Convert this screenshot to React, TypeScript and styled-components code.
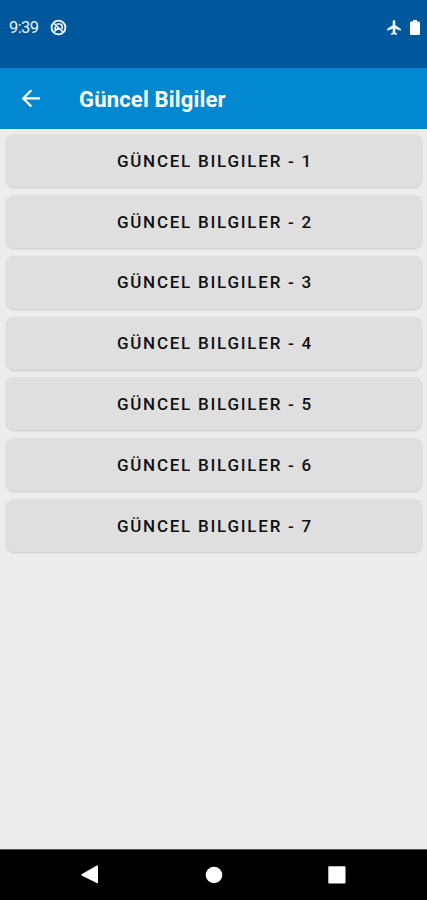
import React from 'react';
import styled, { createGlobalStyle } from 'styled-components';

const GlobalStyle = createGlobalStyle`
  * { box-sizing: border-box; }
  html, body { margin: 0; padding: 0; }
  body { font-family: Roboto, sans-serif; background: #ecedef; }
`;

const Screen = styled.div`
  display: flex;
  flex-direction: column;
  width: 427px;
  height: 900px;
  overflow: hidden;
  background: #ecedef;
`;

const StatusBar = styled.header`
  display: flex;
  align-items: center;
  flex: 0 0 68px;
  padding: 0 7px 13px 9px;
  color: #eef4fb;
  background: #01579b;
`;

const Clock = styled.span`
  width: 41px;
  font-size: 16.5px;
  line-height: 20px;
  letter-spacing: -0.6px;
  padding-top: 1px;
`;

const StatusIcons = styled.div`
  display: flex;
  align-items: center;
  gap: 9px;
  margin-left: auto;
`;

const Icon = styled.svg`
  display: block;
  flex: none;
`;

const AppBar = styled.div`
  display: flex;
  align-items: center;
  flex: 0 0 60.5px;
  padding-left: 18px;
  color: #fff;
  background: #0288d1;
`;

const BackButton = styled.button`
  display: flex;
  width: 61px;
  padding: 0;
  border: 0;
  color: #fff;
  background: none;
`;

const Title = styled.h1`
  margin: 0;
  padding-top: 3px;
  font-size: 22px;
  line-height: 28px;
  font-weight: 700;
  letter-spacing: 0.18px;
`;

const List = styled.main`
  display: flex;
  flex: 1;
  flex-direction: column;
  gap: 7.8px;
  padding: 5.8px 5.5px 0 6.4px;
`;

const ListButton = styled.button`
  flex: 0 0 53px;
  padding: 0 0 0 2px;
  border: 0;
  border-radius: 8px;
  color: #101010;
  background: #dfdfdf;
  box-shadow: 0 1px 2px rgba(0, 0, 0, 0.15);
  font: 500 17px/24px Roboto, sans-serif;
  letter-spacing: 1.75px;
`;

const NavBar = styled.nav`
  display: flex;
  align-items: center;
  justify-content: space-between;
  flex: 0 0 51px;
  padding: 0 81px 0 80px;
  background: #000;
  border-top: 1px solid #555;
`;

const items = [1, 2, 3, 4, 5, 6, 7];

export default function App() {
  return (
    <>
      <GlobalStyle />
      <Screen>
        <StatusBar>
          <Clock>9:39</Clock>
          <Icon width="17" height="17" viewBox="0 0 17 17" fill="none" stroke="currentColor">
            <circle cx="8.5" cy="8.5" r="6.9" strokeWidth="1.9" />
            <path d="M4 4.3 13 13M6.6 5h3.2a2.3 2.3 0 0 1 2.3 2.3v3M5.2 7.6v4.2l1.8-1.6h2" strokeWidth="1.7" />
          </Icon>
          <StatusIcons>
            <Icon width="14" height="15" viewBox="1.5 1.5 21 21" preserveAspectRatio="none" fill="currentColor" stroke="currentColor" strokeWidth="0.8">
              <path d="M22 16v-2l-8.5-5V3.5C13.5 2.67 12.83 2 12 2s-1.5.67-1.5 1.5V9L2 14v2l8.5-2.5V19L8 20.5V22l4-1 4 1v-1.5L13.5 19v-5.5z" />
            </Icon>
            <Icon width="10" height="15" viewBox="0 0 10 15" fill="#fff">
              <path d="M3 0h4v1.5h1.7Q10 1.5 10 2.8v10.9Q10 15 8.7 15H1.3Q0 15 0 13.7V2.8Q0 1.5 1.3 1.5H3z" />
            </Icon>
          </StatusIcons>
        </StatusBar>
        <AppBar>
          <BackButton aria-label="Geri">
            <Icon width="26" height="26" viewBox="0 0 26 26" fill="none" stroke="currentColor" strokeWidth="2.2">
              <path d="M22 13.4H5.5M13.3 5.3 5.2 13.4l8.1 8.1" />
            </Icon>
          </BackButton>
          <Title>Güncel Bilgiler</Title>
        </AppBar>
        <List>
          {items.map((n) => (
            <ListButton key={n}>GÜNCEL BILGILER - {n}</ListButton>
          ))}
        </List>
        <NavBar>
          <Icon width="20" height="20" viewBox="0 0 20 20" fill="#fff">
            <path d="M1.6 9.2 16.7.6Q18 0 18 1.3v16.2q0 1.3-1.3.6L1.6 10.4Q.6 9.8 1.6 9.2z" />
          </Icon>
          <Icon width="18" height="18" viewBox="0 0 18 18" fill="#fff">
            <circle cx="9" cy="9" r="8.3" />
          </Icon>
          <Icon width="18" height="18" viewBox="0 0 18 18" fill="#fff">
            <rect x=".3" y=".3" width="17.2" height="17.2" rx="1" />
          </Icon>
        </NavBar>
      </Screen>
    </>
  );
}
